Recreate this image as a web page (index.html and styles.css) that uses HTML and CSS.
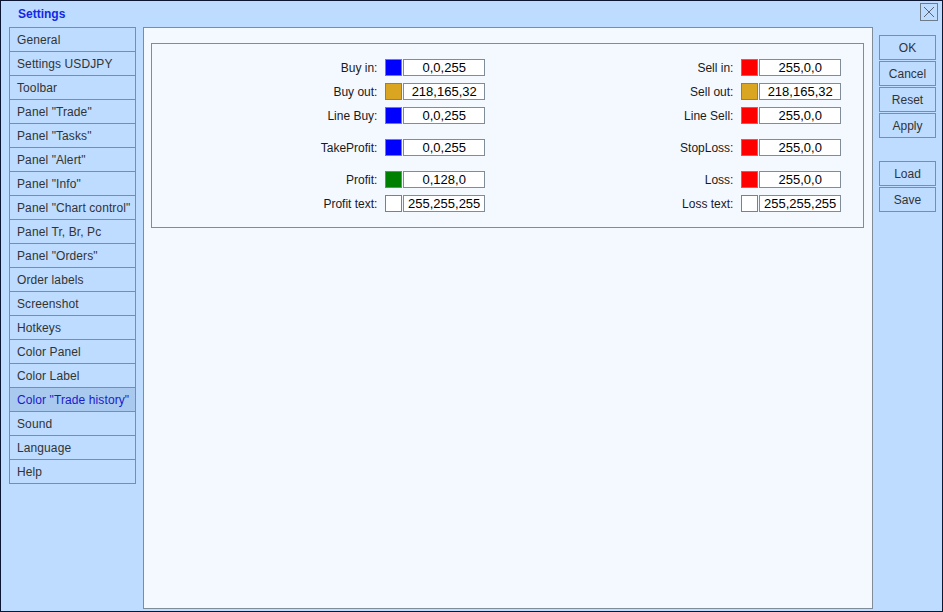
FILE: index.html
```html
<!DOCTYPE html>
<html lang="en-US">
<head>
    <meta charset="UTF-8">
    <title>Settings</title>
    <link rel="stylesheet" href="styles.css">
</head>
<body>
    <div class="window">
        <div class="titlebar">
            <span class="title">Settings</span>
            <button class="close-btn" aria-label="Close">
                <svg width="12" height="12" viewBox="0 0 12 12">
                    <path d="M1 1 L11 11 M11 1 L1 11" stroke="#5a6470" stroke-width="1" fill="none"/>
                </svg>
            </button>
        </div>
        <div class="main">
            <ul class="menu">
                <li>General</li>
                <li>Settings USDJPY</li>
                <li>Toolbar</li>
                <li>Panel "Trade"</li>
                <li>Panel "Tasks"</li>
                <li>Panel "Alert"</li>
                <li>Panel "Info"</li>
                <li>Panel "Chart control"</li>
                <li>Panel Tr, Br, Pc</li>
                <li>Panel "Orders"</li>
                <li>Order labels</li>
                <li>Screenshot</li>
                <li>Hotkeys</li>
                <li>Color Panel</li>
                <li>Color Label</li>
                <li class="active">Color "Trade history"</li>
                <li>Sound</li>
                <li>Language</li>
                <li>Help</li>
            </ul>

            <div class="content">
                <div class="group">
                    <div class="row">
                        <div class="field"><label>Buy in:</label><span class="swatch" style="background: rgb(0,0,255)"></span><span class="value">0,0,255</span></div>
                        <div class="field"><label>Sell in:</label><span class="swatch" style="background: rgb(255,0,0)"></span><span class="value">255,0,0</span></div>
                    </div>
                    <div class="row">
                        <div class="field"><label>Buy out:</label><span class="swatch" style="background: rgb(218,165,32)"></span><span class="value">218,165,32</span></div>
                        <div class="field"><label>Sell out:</label><span class="swatch" style="background: rgb(218,165,32)"></span><span class="value">218,165,32</span></div>
                    </div>
                    <div class="row">
                        <div class="field"><label>Line Buy:</label><span class="swatch" style="background: rgb(0,0,255)"></span><span class="value">0,0,255</span></div>
                        <div class="field"><label>Line Sell:</label><span class="swatch" style="background: rgb(255,0,0)"></span><span class="value">255,0,0</span></div>
                    </div>
                    <div class="row spaced">
                        <div class="field"><label>TakeProfit:</label><span class="swatch" style="background: rgb(0,0,255)"></span><span class="value">0,0,255</span></div>
                        <div class="field"><label>StopLoss:</label><span class="swatch" style="background: rgb(255,0,0)"></span><span class="value">255,0,0</span></div>
                    </div>
                    <div class="row spaced">
                        <div class="field"><label>Profit:</label><span class="swatch" style="background: rgb(0,128,0)"></span><span class="value">0,128,0</span></div>
                        <div class="field"><label>Loss:</label><span class="swatch" style="background: rgb(255,0,0)"></span><span class="value">255,0,0</span></div>
                    </div>
                    <div class="row">
                        <div class="field"><label>Profit text:</label><span class="swatch" style="background: rgb(255,255,255)"></span><span class="value">255,255,255</span></div>
                        <div class="field"><label>Loss text:</label><span class="swatch" style="background: rgb(255,255,255)"></span><span class="value">255,255,255</span></div>
                    </div>
                </div>
            </div>

            <div class="buttons">
                <button class="btn">OK</button>
                <button class="btn">Cancel</button>
                <button class="btn">Reset</button>
                <button class="btn">Apply</button>
                <button class="btn sep">Load</button>
                <button class="btn">Save</button>
            </div>
        </div>
    </div>
</body>
</html>
```

FILE: styles.css
```css
:root {
    --win-bg: #bddcff;
    --panel-bg: #f4f9ff;
    --line: #7f8c99;
    --text: #333;
}

* {
    margin: 0;
    padding: 0;
    box-sizing: border-box;
}

body {
    font-family: Arial, "Liberation Sans", sans-serif;
    font-size: 12px;
    background: #fff;
}

.window {
    width: 943px;
    height: 612px;
    background: var(--win-bg);
    border: 1px solid #0b1633;
    display: flex;
    flex-direction: column;
}

.titlebar {
    height: 26px;
    display: flex;
    align-items: center;
    justify-content: space-between;
    padding: 0 4px 0 17px;
}

.title {
    font-weight: bold;
    color: #1428e6;
    margin-top: -1px;
}

.close-btn {
    width: 18px;
    height: 18px;
    margin-top: -4px;
    border: 1px solid #6e7b88;
    background: var(--win-bg);
    display: flex;
    align-items: center;
    justify-content: center;
}

.main {
    display: flex;
    align-items: flex-start;
    padding-left: 8px;
}

.menu {
    list-style: none;
    width: 127px;
}

.menu li {
    height: 25px;
    line-height: 23px;
    padding-top: 1px;
    border: 1px solid var(--line);
    margin-top: -1px;
    padding-left: 7px;
    color: var(--text);
    white-space: nowrap;
    letter-spacing: 0.1px;
}

.menu li:first-child {
    margin-top: 0;
}

.menu li.active {
    background: #a9c9ee;
    color: #1a1ad0;
}

.content {
    width: 730px;
    height: 582px;
    margin-left: 7px;
    background: var(--panel-bg);
    border: 1px solid var(--line);
    padding: 15px 7px 0 7px;
}

.group {
    width: 713px;
    height: 185px;
    border: 1px solid var(--line);
    padding: 15px 0 0 106px;
}

.row {
    display: flex;
    gap: 129px;
    height: 17px;
    margin-bottom: 7px;
}

.row.spaced {
    margin-top: 15px;
}

.field {
    display: flex;
    align-items: center;
    width: 227px;
}

.field label {
    width: 120px;
    text-align: right;
    margin-right: 8px;
    color: #1a1a1a;
}

.swatch {
    width: 17px;
    height: 17px;
    border: 1px solid #808080;
    margin-right: 1px;
}

.value {
    width: 82px;
    height: 17px;
    line-height: 15px;
    border: 1px solid var(--line);
    background: #fff;
    text-align: center;
    color: #000;
    font-size: 13px;
}

.buttons {
    display: flex;
    flex-direction: column;
    gap: 1px;
    margin-left: 6px;
    margin-top: 8px;
}

.btn {
    width: 57px;
    height: 25px;
    border: 1px solid var(--line);
    background: var(--win-bg);
    color: var(--text);
    font-family: Arial, "Liberation Sans", sans-serif;
    font-size: 12px;
}

.btn.sep {
    margin-top: 22px;
}
```
